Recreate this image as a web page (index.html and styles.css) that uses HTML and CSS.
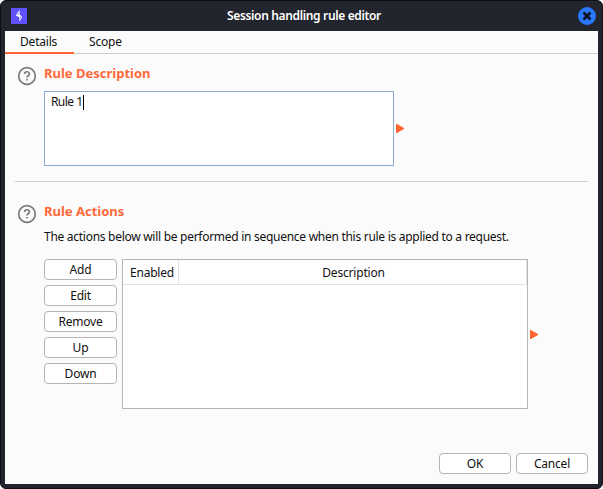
FILE: index.html
```
<!DOCTYPE html>
<html lang="en">
<head>
<meta charset="utf-8">
<title>Session handling rule editor</title>
<link rel="stylesheet" href="styles.css">
</head>
<body>
<div class="window">
  <header class="titlebar">
    <svg class="logo" viewBox="0 0 16 16"><rect width="16" height="16" fill="#5f51ff"/><path d="M8.6 2v4.6L11.2 9 8.4 13.8V9.2L4.8 7.4z" fill="#fff"/><path d="M7.6 4.9v2.2l-1.2-.5zM9.3 11V8.6l.9.5z" fill="#5f51ff"/></svg>
    <h1 class="title"><span>Session handling rule editor</span></h1>
    <svg class="close" viewBox="0 0 18 18"><circle cx="9" cy="9" r="9" fill="#2777ff"/><path d="M5.5 5.5l7 7M12.5 5.5l-7 7" stroke="#0b101c" stroke-width="2.6"/></svg>
  </header>
  <main class="content">
    <nav class="tabs">
      <div class="tab active"><span>Details</span></div>
      <div class="tab scope"><span>Scope</span></div>
    </nav>
    <section class="section description">
      <svg class="help" viewBox="0 0 20 20"><circle cx="10" cy="10" r="8.3"/><path d="M7.6 8c0-3 4.8-3 4.8 0 0 1.8-2.4 1.7-2.4 3.6M10 13v1.5"/></svg>
      <div class="body">
        <h2>Rule Description</h2>
        <div class="row">
          <div class="textbox"><span>Rule 1</span><i class="caret"></i></div>
          <svg class="arrow" viewBox="0 0 8 9"><path d="M0 0h1l7 4v1L1 9H0z"/></svg>
        </div>
      </div>
    </section>
    <div class="rule"></div>
    <section class="section actions">
      <svg class="help" viewBox="0 0 20 20"><circle cx="10" cy="10" r="8.3"/><path d="M7.6 8c0-3 4.8-3 4.8 0 0 1.8-2.4 1.7-2.4 3.6M10 13v1.5"/></svg>
      <div class="body">
        <h2>Rule Actions</h2>
        <p>The actions below will be performed in sequence when this rule is applied to a request.</p>
        <div class="row">
          <div class="buttons">
            <button>Add</button><button>Edit</button><button>Remove</button><button>Up</button><button>Down</button>
          </div>
          <div class="table">
            <div class="thead"><div class="th enabled">Enabled</div><div class="th desc">Description</div></div>
          </div>
          <svg class="arrow" viewBox="0 0 8 9"><path d="M0 0h1l7 4v1L1 9H0z"/></svg>
        </div>
      </div>
    </section>
    <footer class="footer"><button>OK</button><button>Cancel</button></footer>
  </main>
</div>
</body>
</html>
```
FILE: styles.css
```
* { box-sizing: border-box; }
body { margin: 0; background: #fff; font: 12px/16px "Noto Sans", sans-serif; color: #111; overflow: hidden; }
h1, h2, p { margin: 0; }
.window { width: 603px; height: 489px; padding: 0 4px 4px; display: flex; flex-direction: column; background: #23252e; border: 1px solid #0e0f14; border-radius: 6px; }
.titlebar { height: 30px; flex: none; display: flex; align-items: center; padding: 0 2px 0 6px; }
.logo { width: 16px; height: 16px; }
.title { flex: 1; text-align: center; font-size: 12px; font-weight: 600; color: #fff; line-height: 30px; letter-spacing: -0.35px; padding-left: 3px; }
.close { width: 18px; height: 18px; }
.content { flex: 1; display: flex; flex-direction: column; background: #fbfbfb; }
.tabs { display: flex; height: 23px; flex: none; border-bottom: 1px solid #cdcfcf; line-height: 22px; letter-spacing: -0.2px; }
.tab { height: 23px; width: 69px; padding-left: 15px; }
.active { border-bottom: 2px solid #ff6633; }
.section { display: flex; padding-left: 12px; }
.help { width: 20px; height: 20px; flex: none; margin: 2px 7px 0 0; fill: none; stroke: #7b7b7b; stroke-width: 1.7; }
.description { margin-top: 10px; height: 117px; }
h2 { font-size: 13px; line-height: 18px; font-weight: 700; color: #ff6a3a; }
.row { display: flex; }
.textbox { width: 350px; height: 75px; border: 1px solid #86acd3; background: #fff; margin-top: 9px; padding: 2px 6px; display: flex; letter-spacing: -0.6px; word-spacing: 0.4px; }
.caret { width: 1px; height: 15px; margin-top: 1px; background: #000; }
.arrow { width: 8px; height: 9px; flex: none; fill: #ff6633; margin: 42px 0 0 2px; }
.rule { height: 1px; flex: none; margin: 0 10px; background: #cecece; }
.actions { margin-top: 20px; }
.actions p { margin-top: 9px; line-height: 16px; white-space: nowrap; letter-spacing: -0.28px; }
.actions .row { margin-top: 14px; }
.buttons { width: 73px; display: flex; flex-direction: column; gap: 5px; }
button { height: 21px; padding: 0; border: 1px solid #b8b4b6; border-radius: 4px; background: #fff; font: inherit; line-height: 19px; color: #111; letter-spacing: -0.2px; }
.table { width: 406px; height: 150px; margin-left: 5px; border: 1px solid #b5b5b5; background: #fff; letter-spacing: -0.2px; }
.thead { display: flex; height: 25px; border-bottom: 1px solid #e2e2e2; line-height: 25px; text-align: center; }
.th { border-right: 1px solid #e2e2e2; }
.enabled { width: 56px; padding-left: 3px; }
.desc { flex: 1; padding-left: 2px; }
.actions .arrow { margin-top: 71px; }
.footer { margin: auto 10px 10px; display: flex; justify-content: flex-end; gap: 5px; }
.footer button { width: 72px; }
```
